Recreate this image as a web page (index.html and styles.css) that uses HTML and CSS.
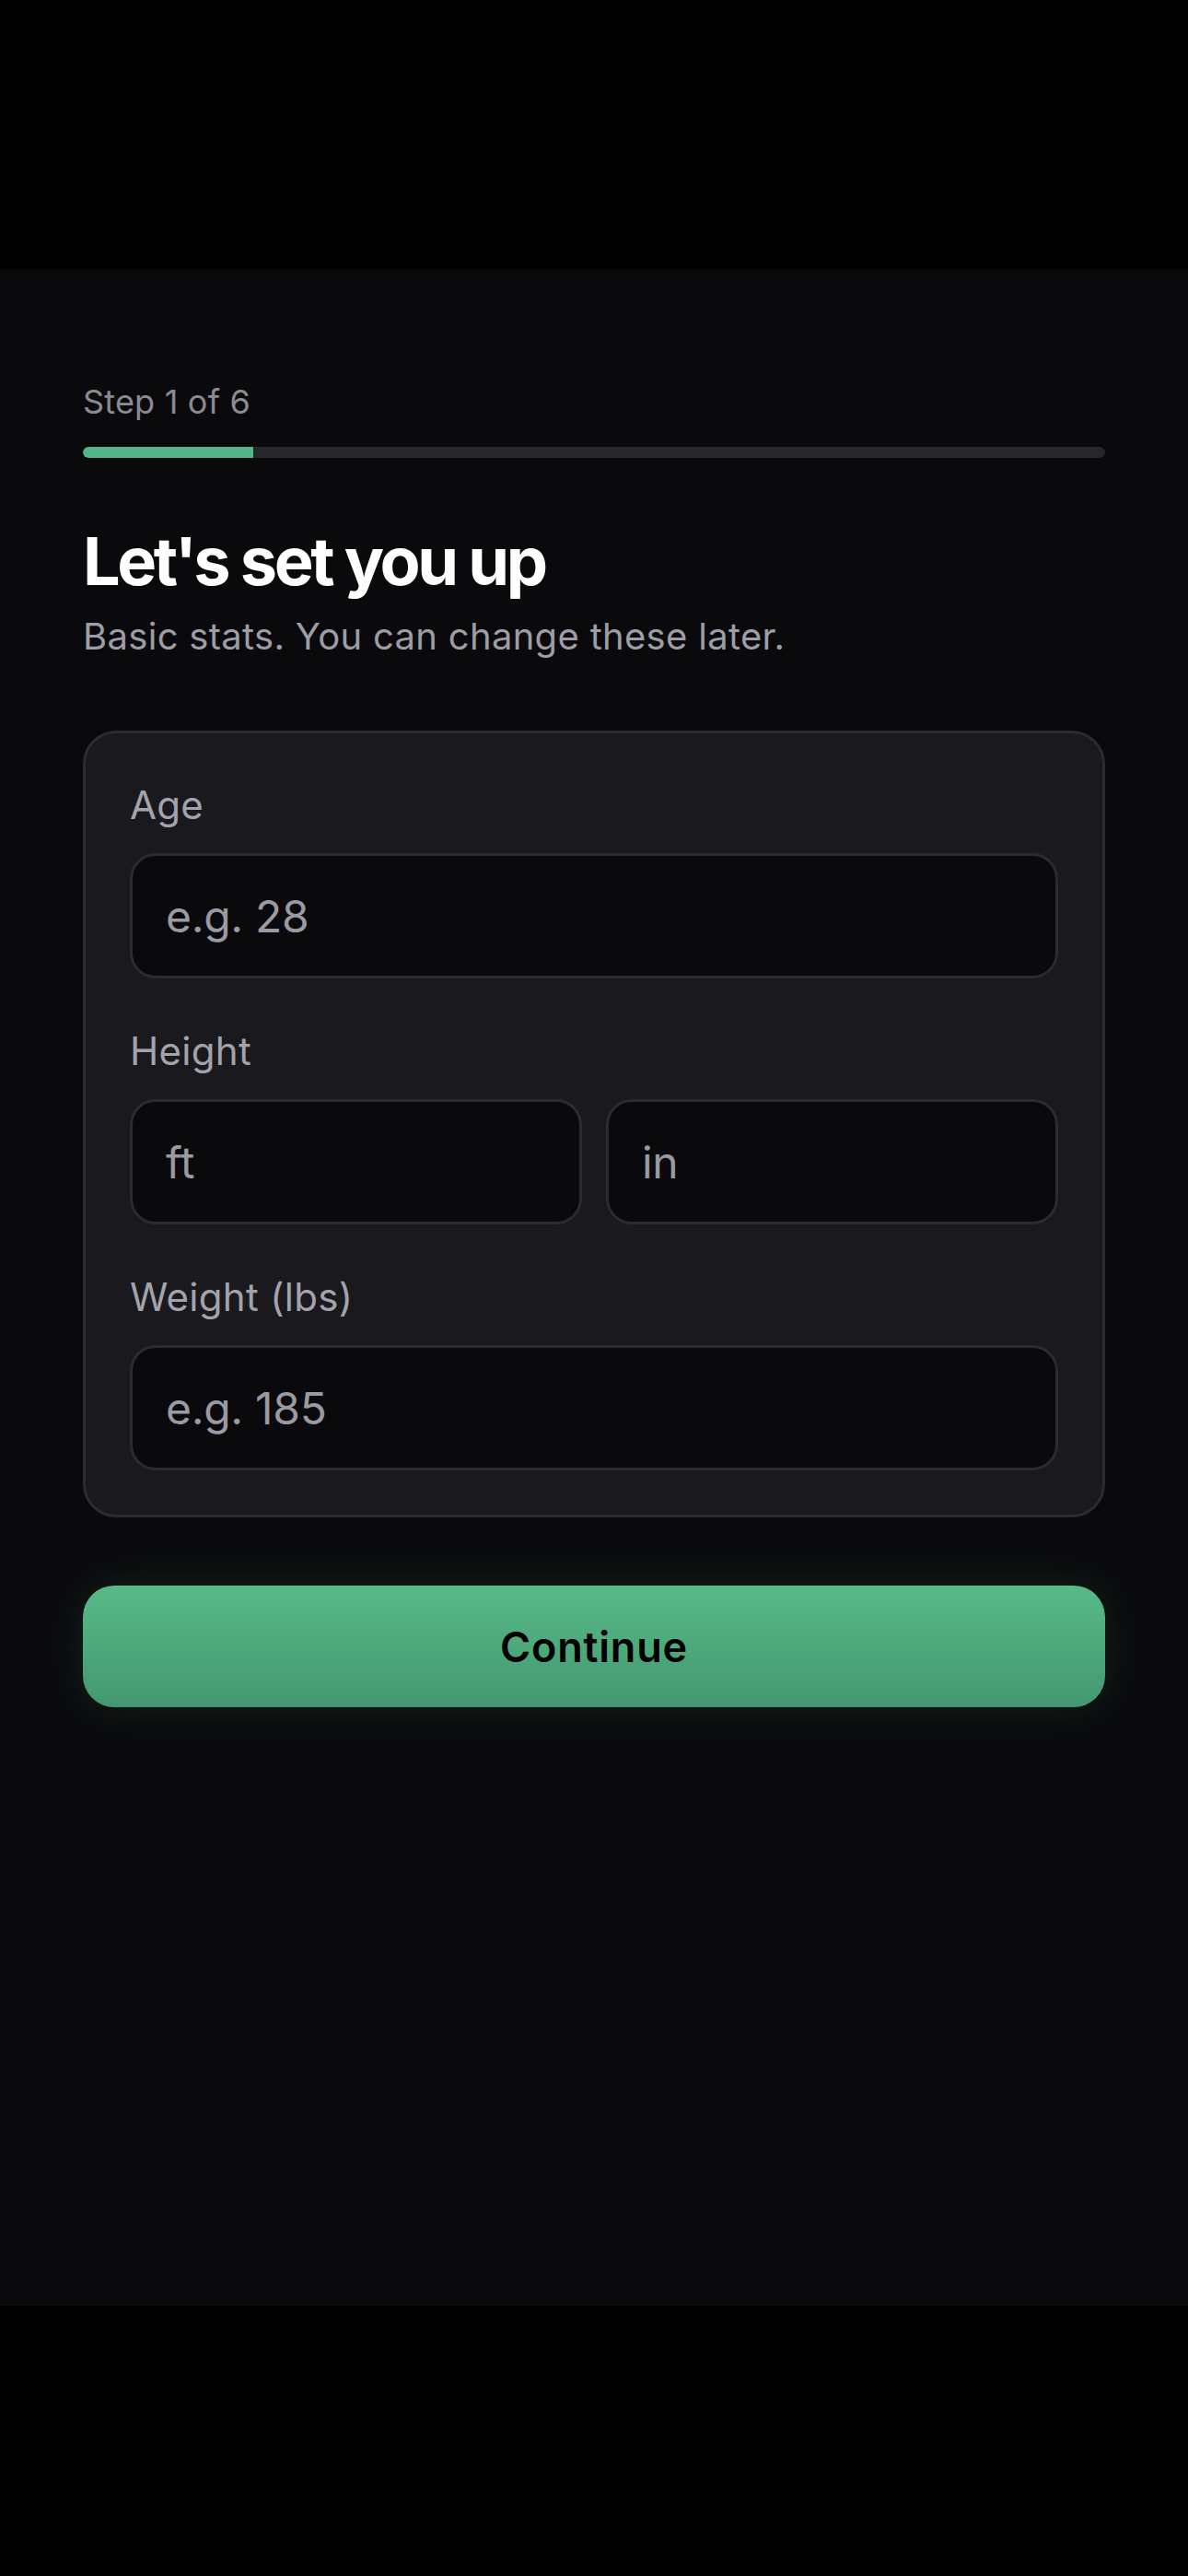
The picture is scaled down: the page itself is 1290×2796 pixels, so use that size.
FILE: index.html
```html
<!DOCTYPE html>
<html lang="en">
<head>
<meta charset="utf-8">
<title>Let's set you up</title>
<link rel="stylesheet" href="styles.css">
</head>
<body>
<div class="band band-top"></div>
<main class="screen">
  <div class="step">Step 1 of 6</div>
  <div class="progress"><div class="progress-fill" style="width: 16.667%"></div></div>
  <h1 class="title">Let's set you up</h1>
  <p class="subtitle">Basic stats. You can change these later.</p>
  <section class="card">
    <div class="field">
      <label class="label">Age</label>
      <div class="input"><span class="ph">e.g. 28</span></div>
    </div>
    <div class="field">
      <label class="label">Height</label>
      <div class="row">
        <div class="input"><span class="ph">ft</span></div>
        <div class="input"><span class="ph">in</span></div>
      </div>
    </div>
    <div class="field">
      <label class="label">Weight (lbs)</label>
      <div class="input"><span class="ph">e.g. 185</span></div>
    </div>
  </section>
  <button class="cta">Continue</button>
</main>
<div class="band band-bottom"></div>
</body>
</html>
```
FILE: styles.css
```css
html, body {
  margin: 0;
  padding: 0;
  background: #000;
}
body {
  width: 1290px;
  height: 2796px;
  display: flex;
  flex-direction: column;
  font-family: Inter, "Noto Sans", "Liberation Sans", sans-serif;
  -webkit-font-smoothing: antialiased;
}
.band {
  background: #000;
  flex: none;
}
.band-top { height: 292px; }
.band-bottom { height: 293px; }
.screen {
  flex: 1;
  background: #0a0a0c;
  padding: 120px 90px 0;
  display: flex;
  flex-direction: column;
}
.step {
  font-size: 36px;
  line-height: 48px;
  letter-spacing: 0.2px;
  color: #8b8b92;
}
.progress {
  margin-top: 25px;
  height: 12px;
  border-radius: 6px;
  background: #27272b;
  overflow: hidden;
}
.progress-fill {
  height: 100%;
  background: #52b788;
  border-radius: 6px 0 0 6px;
}
.title {
  margin: 72px 0 0;
  font-size: 72px;
  line-height: 80px;
  font-weight: 700;
  letter-spacing: -3.4px;
  color: #ffffff;
}
.subtitle {
  margin: 16px 0 0;
  font-size: 40px;
  line-height: 52px;
  letter-spacing: 0.3px;
  color: #9d9da5;
}
.card {
  margin-top: 76px;
  background: #1a1a1e;
  border: 3px solid #2b2b30;
  border-radius: 36px;
  padding: 48px;
  display: flex;
  flex-direction: column;
  gap: 49px;
}
.field {
  display: flex;
  flex-direction: column;
}
.label {
  font-size: 42px;
  line-height: 60px;
  letter-spacing: 0.3px;
  color: #a3a3ab;
  margin-bottom: 22px;
}
.row {
  display: flex;
  gap: 26px;
}
.row .input { flex: 1; }
.input {
  box-sizing: border-box;
  height: 136px;
  background: #0a0a0c;
  border: 3px solid #2b2b30;
  border-radius: 28px;
  padding: 0 36px;
  display: flex;
  align-items: center;
}
.ph {
  font-size: 48px;
  letter-spacing: -0.3px;
  color: #9a9aa3;
}
.cta {
  margin-top: 74px;
  height: 132px;
  border: none;
  border-radius: 34px;
  background: linear-gradient(180deg, #58ba88 0%, #449770 100%);
  box-shadow: 0 0 48px rgba(82, 183, 136, 0.14);
  font-family: Inter, "Noto Sans", "Liberation Sans", sans-serif;
  font-size: 45px;
  font-weight: 600;
  letter-spacing: 0.8px;
  color: #000;
  padding: 0;
}
```
